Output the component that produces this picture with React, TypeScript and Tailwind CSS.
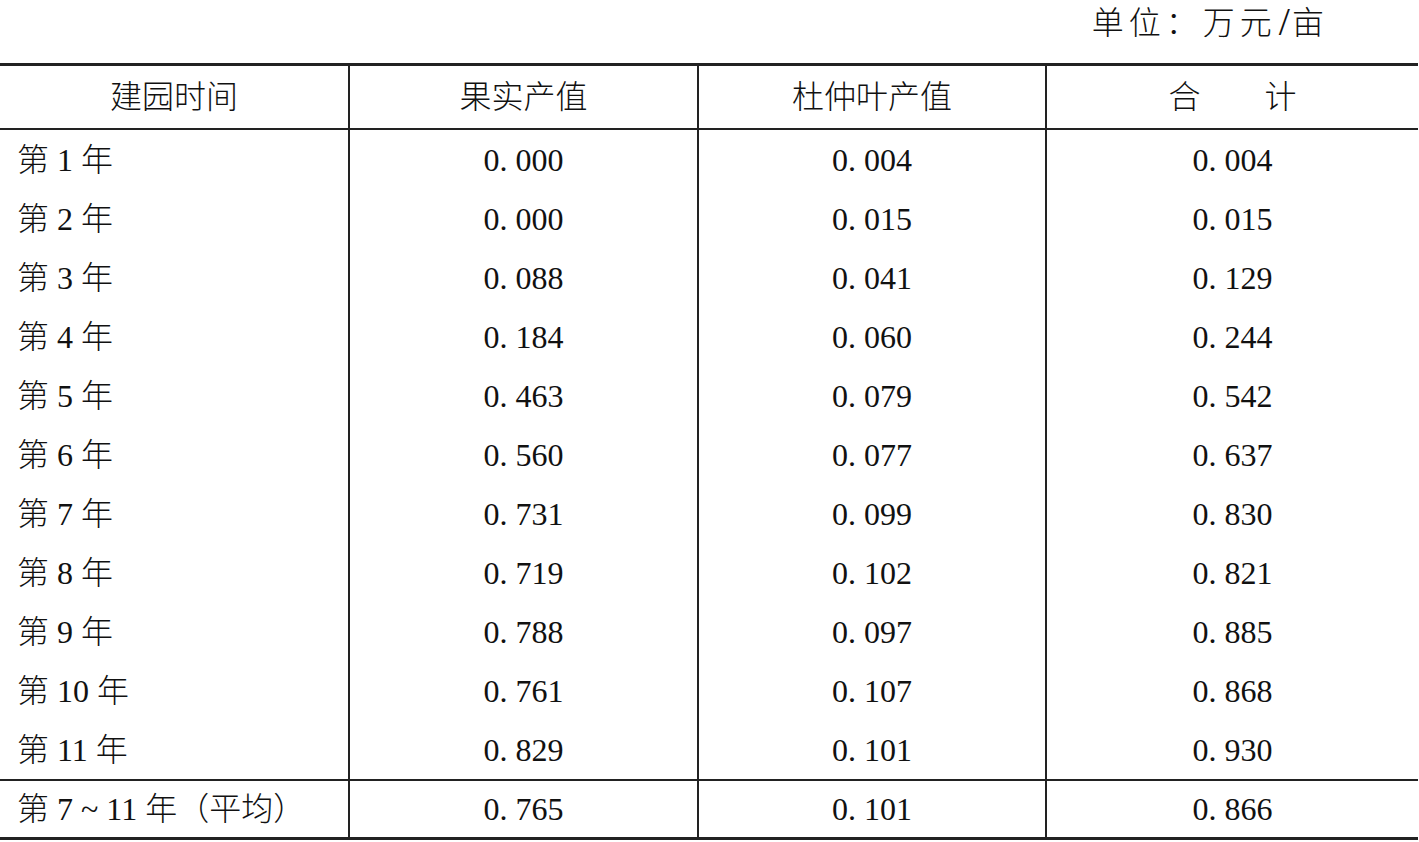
const rows: [string, string, string, string][] = [
  ["第 1 年", "0. 000", "0. 004", "0. 004"],
  ["第 2 年", "0. 000", "0. 015", "0. 015"],
  ["第 3 年", "0. 088", "0. 041", "0. 129"],
  ["第 4 年", "0. 184", "0. 060", "0. 244"],
  ["第 5 年", "0. 463", "0. 079", "0. 542"],
  ["第 6 年", "0. 560", "0. 077", "0. 637"],
  ["第 7 年", "0. 731", "0. 099", "0. 830"],
  ["第 8 年", "0. 719", "0. 102", "0. 821"],
  ["第 9 年", "0. 788", "0. 097", "0. 885"],
  ["第 10 年", "0. 761", "0. 107", "0. 868"],
  ["第 11 年", "0. 829", "0. 101", "0. 930"],
];

const font = {
  fontFamily: '"Liberation Serif", "Noto Sans CJK SC", serif',
};

function Row({
  cells,
  height,
  header,
}: {
  cells: string[];
  height: string;
  header?: boolean;
}) {
  return (
    <div className={`grid grid-cols-[348px_349px_348px_373px] ${height}`}>
      {cells.map((c, i) => (
        <div
          key={i}
          className={`flex items-center whitespace-pre ${
            i === 0 && !header ? "pl-[17px]" : "justify-center"
          } ${i > 0 ? "border-l-2 border-[#222]" : ""}`}
        >
          {c}
        </div>
      ))}
    </div>
  );
}

export default function App() {
  return (
    <div
      className="w-[1419px] h-[842px] bg-white text-[#111] text-[32px] font-light leading-none"
      style={font}
    >
      {/* unit caption above the table */}
      <div className="h-[63px] flex justify-end items-start pt-[6px] pr-[90px] tracking-[5px]">
        <span className="pt-[1px]">单位：万元</span>
        <span className="px-[2px] tracking-normal text-[40px] leading-none -mt-[4px]">/</span>
        <span className="pt-[1px]">亩</span>
      </div>
      <div className="w-[1418px] border-t-[3px] border-b-[3px] border-[#222]">
        <Row
          header
          height="h-[64px] border-b-2 border-[#222]"
          cells={["建园时间", "果实产值", "杜仲叶产值", "合　　计"]}
        />
        <div className="flex flex-col">
          {rows.map((r) => (
            <Row key={r[0]} cells={r} height="h-[59px]" />
          ))}
        </div>
        <Row
          height="h-[58px] border-t-2 border-[#222]"
          cells={["第 7 ~ 11 年（平均）", "0. 765", "0. 101", "0. 866"]}
        />
      </div>
    </div>
  );
}
